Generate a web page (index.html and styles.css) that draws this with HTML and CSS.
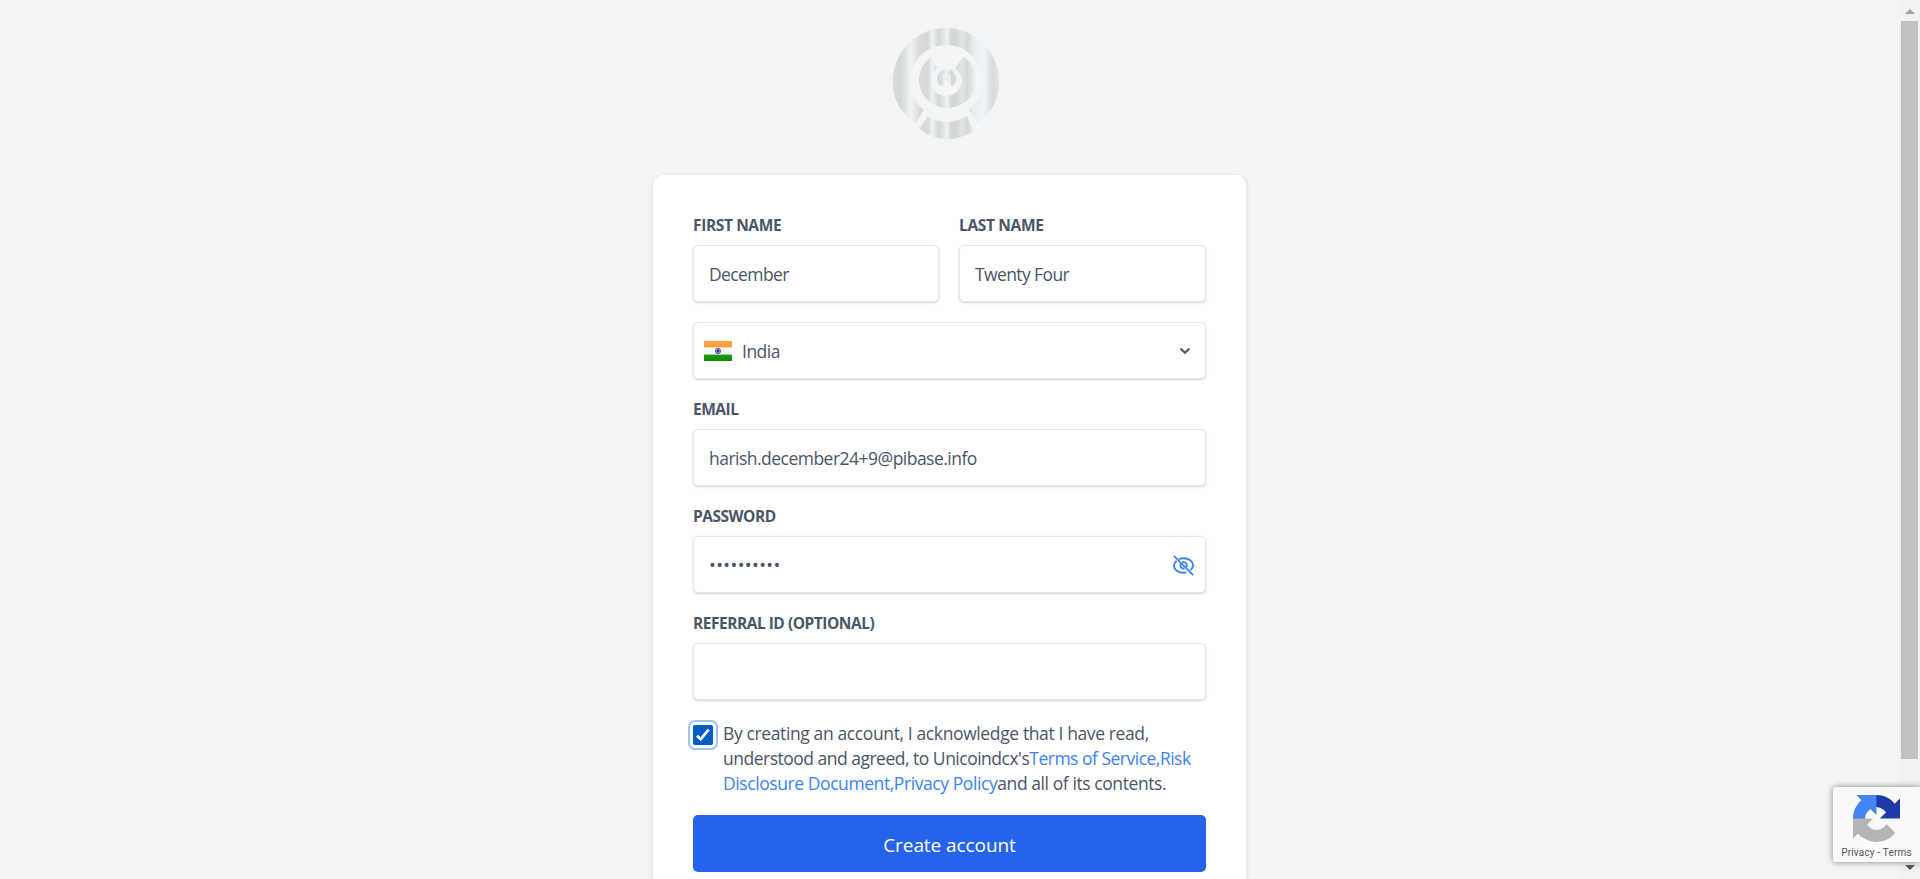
FILE: index.html
```html
<!DOCTYPE html>
<html lang="en">
<head>
<meta charset="utf-8">
<title>Create account</title>
<link rel="stylesheet" href="styles.css">
</head>
<body>
<div class="page">
  <main class="content">
    <svg class="logo" viewBox="0 0 390 405" aria-label="Unicoindcx">
      <defs>
        <linearGradient id="silver" gradientUnits="userSpaceOnUse" x1="38" y1="0" x2="358" y2="0">
          <stop offset="0" stop-color="#d9dbdc"/><stop offset=".07" stop-color="#d5d7d8"/><stop offset=".17" stop-color="#edf3f5"/>
          <stop offset=".25" stop-color="#dadcdd"/><stop offset=".33" stop-color="#d6d8d9"/><stop offset=".37" stop-color="#edf3f5"/>
          <stop offset=".43" stop-color="#d5d7d8"/><stop offset=".48" stop-color="#e2e5e6"/><stop offset=".51" stop-color="#edf3f5"/><stop offset=".55" stop-color="#d5d7d8"/>
          <stop offset=".6" stop-color="#d5d7d8"/><stop offset=".65" stop-color="#e2e6e7"/><stop offset=".7" stop-color="#d6d9da"/>
          <stop offset=".76" stop-color="#e8edee"/><stop offset=".86" stop-color="#edf4f6"/><stop offset=".94" stop-color="#d8dadb"/><stop offset="1" stop-color="#e3e6e7"/>
        </linearGradient>
      </defs>
      <g fill="url(#silver)">
        <path d="M108 323C65 298 38 255 38 204C38 113 108 39 198 39S358 113 358 204C358 253 332 297 293 324L267 285C292 265 307 235 307 198C307 136 259 90 199 90S91 136 91 198C91 233 107 264 132 285Z"/>
        <path d="M143 304Q200 337 260 304L281 348C230 381 165 380 118 342Z"/>
        <path d="M152 127L172 160A46 46 0 1 0 226 160L250 125A86 84 0 1 1 152 127Z"/>
        <path d="M180 212A29 29 0 1 1 220 212L201 204Z"/>
      </g>
      <path d="M192 205V178M210 178V205" fill="none" stroke="#f2f4f6" stroke-width="4"/>
      <path d="M201 194L184 215H218Z" fill="#f3f4f6"/>
      <path d="M119 334q-3 6 5 9" fill="none" stroke="#d9dbdc" stroke-width="3"/>
    </svg>
    <form class="card">
      <div class="row">
        <div class="field"><label class="label"><span class="l-first">FIRST NAME</span></label><div class="box"><span class="t-name">December</span></div></div>
        <div class="field"><label class="label"><span class="l-last">LAST NAME</span></label><div class="box"><span class="t-name">Twenty Four</span></div></div>
      </div>
      <div class="box select">
        <svg class="flag" viewBox="0 0 28 20">
          <defs>
            <linearGradient id="saffron" x2="0" y2="1"><stop stop-color="#ffa44a"/><stop offset="1" stop-color="#ff9934"/></linearGradient>
            <linearGradient id="white" x2="0" y2="1"><stop stop-color="#fff"/><stop offset="1" stop-color="#f0f0f0"/></linearGradient>
            <linearGradient id="green" x2="0" y2="1"><stop stop-color="#1a9f0b"/><stop offset="1" stop-color="#138806"/></linearGradient>
          </defs>
          <path fill="url(#white)" d="M0 6h28v8H0z"/><path fill="url(#saffron)" d="M0 0h28v6.4H0z"/><path fill="url(#green)" d="M0 13.6h28V20H0z"/>
          <circle cx="14" cy="10" r="2.6" fill="#8a8ac6" stroke="#4b4ba5" stroke-width=".9"/><circle cx="14" cy="10" r="1" fill="#15157c"/>
        </svg>
        <span class="t-country">India</span>
        <svg class="chevron" viewBox="0 0 12 8"><path d="M1.5 1.5L6 5.8L10.500 1.500" fill="none" stroke="#4a5568" stroke-width="2"/></svg>
      </div>
      <div class="field"><label class="label"><span class="l-email">EMAIL</span></label><div class="box"><span class="t-email">harish.december24+9@pibase.info</span></div></div>
      <div class="field"><label class="label"><span class="l-pass">PASSWORD</span></label>
        <div class="box"><span class="dots">••••••••••</span>
          <svg class="eye" viewBox="0 0 24 24" fill="none" stroke="#3b82f6" stroke-width="2"><path d="M2 2L22 22"/><path d="M4.800 7.200C3 8.500 2 10.200 2 12c0 4.200 4.500 7.600 10 7.600 1.200 0 2-.1 3-.4M7.500 5.300C8.900 4.700 10.400 4.400 12 4.400c5.500 0 10 3.400 10 7.600 0 1.900-1.100 3.600-2.700 4.900M10.500 8.500H12A3.500 3.500 0 0 1 15.500 12V13.500"/><path d="M8.800 10.500C8 13.500 10.500 15.800 13 15"/></svg>
        </div></div>
      <div class="field"><label class="label"><span class="l-ref">REFERRAL ID (OPTIONAL)</span></label><div class="box"></div></div>
      <div class="terms">
        <span class="check"><svg viewBox="0 0 20 20"><path d="M4 10.800L7.600 14.300L15.700 4.700" fill="none" stroke="#fff" stroke-width="2.800"/></svg></span>
        <div class="legal">
          <div><span class="g1">By creating an account, I acknowledge that I have read,</span></div>
          <div><span class="g2">understood and agreed, to Unicoindcx's<a>Terms of Service,Risk</a></span></div>
          <div><span class="g3"><a>Disclosure Document,Privacy Policy</a>and all of its contents.</span></div>
        </div>
      </div>
      <button class="submit" type="button">Create account</button>
    </form>
  </main>
  <div class="scrollbar">
    <svg class="arrow" viewBox="0 0 10 5"><path d="M0 5L5 0L10 5z" fill="#a3a3a3"/></svg>
    <div class="thumb"></div>
    <svg class="arrow" viewBox="0 0 10 5"><path d="M0 0L5 5L10 0z" fill="#505050"/></svg>
  </div>
</div>
<aside class="badge">
  <svg class="recaptcha" viewBox="0 0 64 64">
    <path d="M64 31.955l-.033-1.370V4.687l-7.160 7.160C50.948 4.674 42.033.093 32.050.093c-10.400 0-19.622 4.960-25.458 12.640l11.736 11.860a15.550 15.550 0 0 1 4.754-5.334c2.050-1.600 4.952-2.906 8.968-2.906.485 0 .860.057 1.135.163 4.976.393 9.288 3.140 11.828 7.124l-8.307 8.307L64 31.953" fill="#1c3aa9"/>
    <path d="M31.862.094l-1.370.033H4.594l7.160 7.160C4.580 13.147 0 22.060 0 32.046c0 10.400 4.960 19.622 12.640 25.458L24.500 45.768a15.550 15.550 0 0 1-5.334-4.754c-1.600-2.050-2.906-4.952-2.906-8.968 0-.485.057-.860.163-1.135.393-4.976 3.140-9.288 7.124-11.828l8.307 8.307L31.860.095" fill="#4285f4"/>
    <path d="M.001 32.045l.033 1.370v25.898l7.160-7.160c5.860 7.173 14.774 11.754 24.760 11.754 10.400 0 19.622-4.960 25.458-12.640l-11.736-11.860a15.550 15.550 0 0 1-4.754 5.334c-2.050 1.600-4.952 2.906-8.968 2.906-.485 0-.860-.057-1.135-.163-4.976-.393-9.288-3.140-11.828-7.124l8.307-8.307c-10.522.040-22.400.066-27.295-.005" fill="#b5b5b5"/>
  </svg>
  <div class="policy">Privacy - Terms</div>
</aside>
</body>
</html>
```
FILE: styles.css
```css
* { box-sizing: border-box; }
body { margin: 0; background: #f3f4f6; font-family: "Open Sans", "Noto Sans", sans-serif; color: #4a5568; overflow: hidden; }
.page { display: flex; height: 879px; overflow: hidden; }
.content { flex: 1; display: flex; flex-direction: column; align-items: center; padding-top: 15px; }
.logo { width: 130px; height: 135px; flex: none; margin: 0 9px 25px 0; }
.card { width: 593px; height: 760px; flex: none; padding: 40px; background: #fff; border-radius: 10px; box-shadow: 0 1px 4px rgba(0,0,0,.13); display: flex; flex-direction: column; gap: 20px; }
.row { display: grid; grid-template-columns: 246px 247px; gap: 20px; }
.label { display: block; height: 20px; margin-bottom: 10px; line-height: 20px; font-size: 15.5px; font-weight: 700; white-space: nowrap; }
.l-first { letter-spacing: -.38px; }
.l-last { letter-spacing: -.33px; }
.l-email, .l-pass, .l-ref { letter-spacing: -.48px; }
.box { height: 57px; display: flex; align-items: center; padding: 1px 16px 0 15px; border: 1px solid #e5e7eb; border-radius: 5px; background: #fff; box-shadow: 0 1px 3px rgba(0,0,0,.12), 0 1px 1px rgba(0,0,0,.05); font-size: 17.5px; font-weight: 370; white-space: nowrap; }
.t-name { letter-spacing: -.6px; }
.t-email { letter-spacing: -.52px; }
.t-country { letter-spacing: -.5px; padding-top: 1px; }
.select { padding: 0 16px 0 10px; flex: none; }
.flag { width: 28px; height: 20px; margin-right: 10px; }
.chevron { width: 12px; height: 8px; margin-left: auto; margin-right: -2px; }
.dots { font-size: 18px; letter-spacing: .4px; font-weight: 400; }
.eye { width: 23px; height: 23px; margin-left: auto; margin-right: -6px; }
.terms { display: flex; gap: 10px; height: 75px; }
.check { width: 20px; height: 20px; margin-top: 5px; background: #005cc8; border-radius: 2px; outline: 2px solid #a2c3fa; outline-offset: 3px; flex: none; }
.check svg { display: block; }
.legal { font-size: 17.5px; font-weight: 370; line-height: 25px; padding-top: 1px; white-space: nowrap; }
.legal a { color: #3b82f6; }
.g1 { letter-spacing: -.38px; }
.g2 { letter-spacing: -.5px; }
.g3 { letter-spacing: -.42px; }
.submit { height: 57px; border: 0; border-radius: 5px; background: #2563eb; color: #fff; font: 400 19px "Open Sans", sans-serif; letter-spacing: -.07px; padding: 2px 0 0; flex: none; }
.scrollbar { width: 21px; background: #f1f1f1; display: flex; flex-direction: column; align-items: center; padding: 9px 0 9px; }
.arrow { width: 10px; height: 5px; flex: none; }
.thumb { width: 17px; height: 738px; margin: 7px 0 106px; background: #c1c1c1; flex: none; }
.badge { position: absolute; left: 1833px; top: 787px; width: 87px; height: 75px; background: #f9f9f9; border-radius: 3px 0 0 3px; box-shadow: 0 0 6px #808080; display: flex; flex-direction: column; align-items: center; padding-top: 8px; }
.recaptcha { width: 47px; height: 47px; }
.policy { font: 10px/12px Roboto, sans-serif; letter-spacing: .18px; color: #555; margin-top: 5px; white-space: nowrap; }
```
